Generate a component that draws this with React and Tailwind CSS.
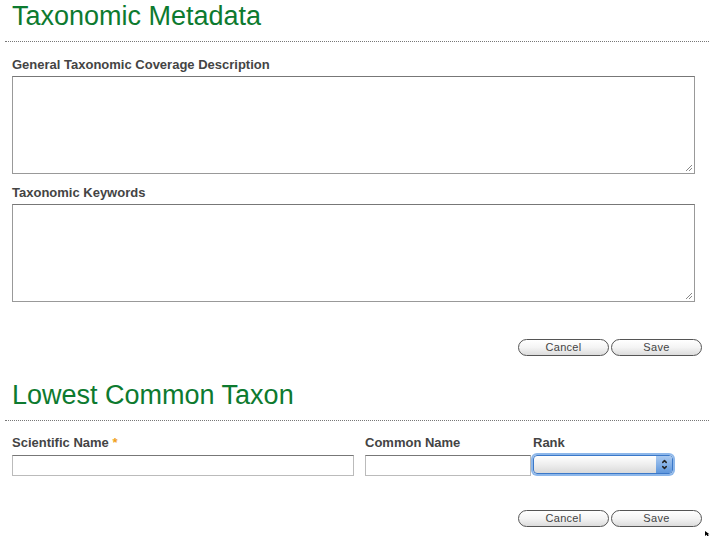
import { ChevronUp, ChevronDown } from "lucide-react";

function Heading({ children }) {
  return (
    <div className="border-b border-dotted border-[#777] mx-[5px]">
      <h1 className="pl-[7px] text-[27px] leading-[30px] pt-[1px] pb-[10px] text-[#0d7a2f]">
        {children}
      </h1>
    </div>
  );
}

function Label({ children }) {
  return (
    <label className="block text-[13px] leading-[14px] font-bold text-[#444]">
      {children}
    </label>
  );
}

function Area() {
  return (
    <div className="relative h-[98px] border border-[#999] border-t-[#777] bg-white">
      <svg
        width="7"
        height="7"
        viewBox="0 0 7 7"
        className="absolute right-[2px] bottom-[2px]"
      >
        <path d="M1 7 L7 1 M4 7 L7 4" stroke="#888" strokeWidth="1" />
      </svg>
    </div>
  );
}

function PillButton({ children }) {
  return (
    <button className="w-[91px] h-[17px] rounded-full border border-[#555] bg-gradient-to-b from-white via-[#f4f4f4] to-[#dcdcdc] text-[11px] leading-[15px] tracking-[0.3px] text-[#444]">
      {children}
    </button>
  );
}

function Buttons() {
  return (
    <div className="flex justify-end gap-[2px] pr-[12px]">
      <PillButton>Cancel</PillButton>
      <PillButton>Save</PillButton>
    </div>
  );
}

export default function App() {
  return (
    <div className="w-[714px] h-[536px] overflow-hidden bg-white font-['Liberation_Sans',Arial,sans-serif] relative">
      <Heading>Taxonomic Metadata</Heading>

      <div className="px-[12px] pr-[19px] pt-[16px]">
        <Label>General Taxonomic Coverage Description</Label>
        <div className="mt-[4px]">
          <Area />
        </div>
        <div className="mt-[12px]">
          <Label>Taxonomic Keywords</Label>
        </div>
        <div className="mt-[4px]">
          <Area />
        </div>
      </div>

      <div className="mt-[37px]">
        <Buttons />
      </div>

      <div className="mt-[23px]">
        <Heading>Lowest Common Taxon</Heading>
      </div>

      <div className="flex pl-[12px] pt-[15px]">
        <div className="w-[342px]">
          <Label>
            Scientific Name <span className="text-[#f0a020]">*</span>
          </Label>
          <div className="mt-[5px] h-[21px] border border-[#bbb] border-t-[#777] bg-white" />
        </div>
        <div className="ml-[11px] w-[166px]">
          <Label>Common Name</Label>
          <div className="mt-[5px] h-[21px] border border-[#bbb] border-t-[#777] bg-white" />
        </div>
        <div className="ml-[2px] w-[140px]">
          <Label>Rank</Label>
          <div className="mt-[5px] h-[19px] rounded-[4px] border border-[#3b78c8] shadow-[0_0_0_2px_#8db7ea] bg-gradient-to-b from-white via-[#eeeeee] to-[#dadada] flex justify-end overflow-hidden">
            <div className="w-[16px] h-full bg-gradient-to-b from-[#a9c9f0] to-[#5f97dc] flex flex-col items-center justify-center">
              <ChevronUp size={7} strokeWidth={5} className="text-[#222] -mb-[1px]" />
              <ChevronDown size={7} strokeWidth={5} className="text-[#222]" />
            </div>
          </div>
        </div>
      </div>

      <div className="mt-[34px]">
        <Buttons />
      </div>

      <svg
        width="6"
        height="6"
        viewBox="0 0 6 6"
        className="absolute left-[705px] top-[531px]"
      >
        <path d="M0 0 L0 5 L1.5 3.8 L3 6 L4 5.5 L2.8 3.3 L4.5 3.3 Z" fill="#000" />
      </svg>
    </div>
  );
}
